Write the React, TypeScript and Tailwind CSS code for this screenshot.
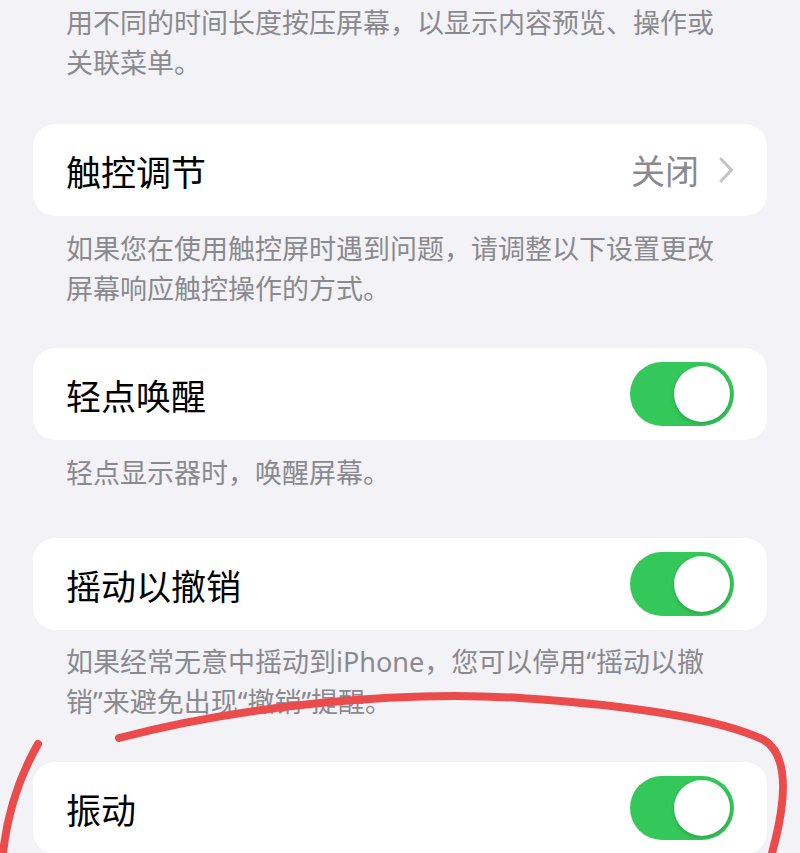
import React from "react";

const font = { fontFamily: '"Noto Sans CJK SC", "Noto Sans", sans-serif' };
// Latin first so the curly quotes come out narrow, as in the screenshot
const latinFirst = { fontFamily: '"Noto Sans", "Noto Sans CJK SC", sans-serif' };

function Toggle() {
  return (
    <div className="flex h-[64px] w-[104px] items-center justify-end rounded-full bg-[#34c759] p-[4px]">
      <div className="h-[56px] w-[56px] rounded-full bg-white shadow-[0_2px_4px_rgba(0,0,0,0.18)]" />
    </div>
  );
}

function Footer({
  children,
  className = "",
  style,
}: {
  children: React.ReactNode;
  className?: string;
  style?: React.CSSProperties;
}) {
  return (
    <p className={`pl-[66px] pr-[72px] text-[27px] leading-[40px] text-[#8a8a8e] ${className}`} style={style}>
      {children}
    </p>
  );
}

function Card({ title, right }: { title: string; right: React.ReactNode }) {
  return (
    <div className="mx-[33px] flex h-[92px] items-center justify-between rounded-[22px] bg-white px-[33px]">
      <span className="text-[35px] leading-none text-black">{title}</span>
      {right}
    </div>
  );
}

export default function App() {
  return (
    <div className="relative h-[853px] w-[800px] overflow-hidden bg-[#f2f2f7] pt-[2px]" style={font}>
      <Footer className="mb-[42px]">用不同的时间长度按压屏幕，以显示内容预览、操作或关联菜单。</Footer>

      <Card
        title="触控调节"
        right={
          <div className="flex items-center gap-[24px]">
            <span className="-mr-[4px] text-[34px] leading-none text-[#8a8a8e]">关闭</span>
            <svg width="15" height="26" viewBox="0 0 15 26" fill="none">
              <path d="M2 2 L12.5 13 L2 24" stroke="#c4c4c8" strokeWidth="3" strokeLinecap="round" strokeLinejoin="round" />
            </svg>
          </div>
        }
      />
      <Footer className="mt-[12px] mb-[40px]">如果您在使用触控屏时遇到问题，请调整以下设置更改屏幕响应触控操作的方式。</Footer>

      <Card title="轻点唤醒" right={<Toggle />} />
      <Footer className="mt-[12px] mb-[46px]">轻点显示器时，唤醒屏幕。</Footer>

      <Card title="摇动以撤销" right={<Toggle />} />
      <Footer className="mt-[12px] mb-[40px]" style={latinFirst}>
        如果经常无意中摇动到iPhone，您可以停用“摇动以撤销”来避免出现“撤销”提醒。
      </Footer>

      <Card title="振动" right={<Toggle />} />

      {/* red hand-drawn circle */}
      <svg className="pointer-events-none absolute left-0 top-0" width="800" height="853" viewBox="0 0 800 853" fill="none">
        <path d="M38 744 C 22 772, 8 808, 3 853" stroke="#ec4b4b" strokeWidth="8" strokeLinecap="round" />
        <path
          d="M119 738 C 240 706, 400 690, 520 698 C 640 706, 722 720, 764 740 C 790 756, 786 802, 772 853"
          stroke="#ec4b4b"
          strokeWidth="8"
          strokeLinecap="round"
        />
      </svg>
    </div>
  );
}
